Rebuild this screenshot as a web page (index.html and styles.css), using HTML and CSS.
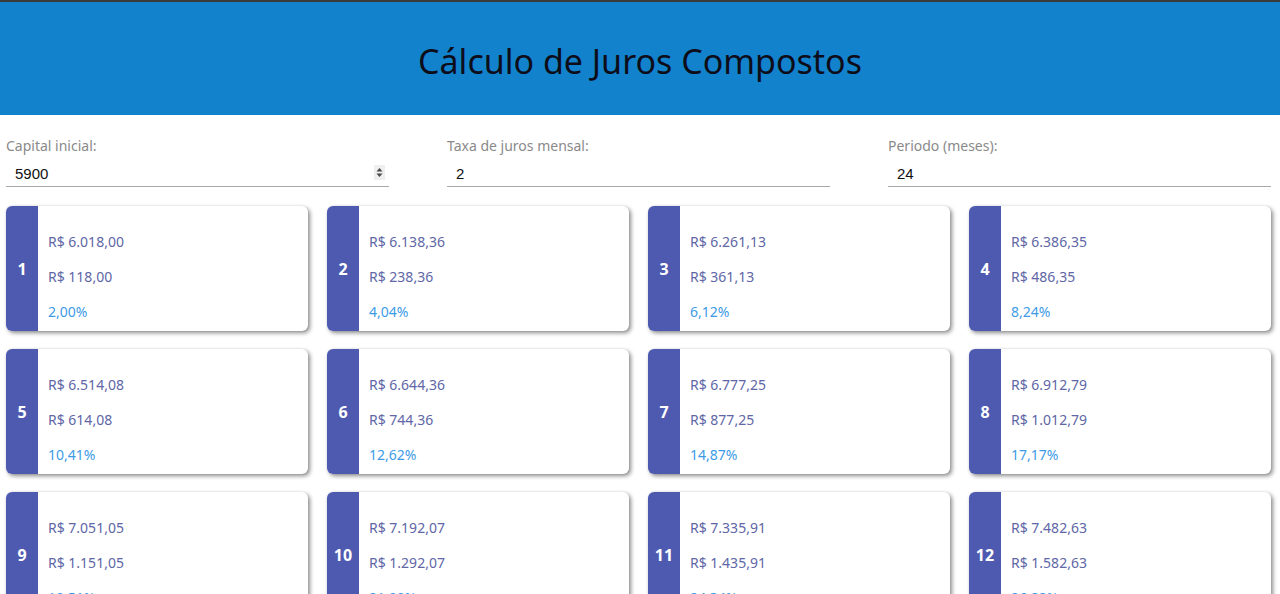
FILE: index.html
```
<!DOCTYPE html>
<html lang="pt-BR">
<head>
<meta charset="utf-8">
<title>Cálculo de Juros Compostos</title>
<link rel="stylesheet" href="styles.css">
</head>
<body>
<header class="topbar">
  <h1 class="title">Cálculo de Juros Compostos</h1>
</header>
<section class="form">
  <div class="field">
    <label class="label">Capital inicial:</label>
    <div class="control">
      <input class="input" type="text" value="5900">
      <svg class="spin" width="11" height="15" viewBox="0 0 11 15"><rect width="11" height="15" fill="#efefef"/><path d="M2.5 6.5 L5.5 3 L8.5 6.5 Z M2.5 8.5 L5.5 12 L8.5 8.5 Z" fill="#4a4a4a"/></svg>
    </div>
  </div>
  <div class="field">
    <label class="label">Taxa de juros mensal:</label>
    <div class="control"><input class="input" type="text" value="2"></div>
  </div>
  <div class="field">
    <label class="label">Periodo (meses):</label>
    <div class="control"><input class="input" type="text" value="24"></div>
  </div>
</section>
<section class="grid">
  <div class="card"><div class="num">1</div><div class="vals"><span class="v">R$ 6.018,00</span><span class="v">R$ 118,00</span><span class="p">2,00%</span></div></div>
  <div class="card"><div class="num">2</div><div class="vals"><span class="v">R$ 6.138,36</span><span class="v">R$ 238,36</span><span class="p">4,04%</span></div></div>
  <div class="card"><div class="num">3</div><div class="vals"><span class="v">R$ 6.261,13</span><span class="v">R$ 361,13</span><span class="p">6,12%</span></div></div>
  <div class="card"><div class="num">4</div><div class="vals"><span class="v">R$ 6.386,35</span><span class="v">R$ 486,35</span><span class="p">8,24%</span></div></div>
  <div class="card"><div class="num">5</div><div class="vals"><span class="v">R$ 6.514,08</span><span class="v">R$ 614,08</span><span class="p">10,41%</span></div></div>
  <div class="card"><div class="num">6</div><div class="vals"><span class="v">R$ 6.644,36</span><span class="v">R$ 744,36</span><span class="p">12,62%</span></div></div>
  <div class="card"><div class="num">7</div><div class="vals"><span class="v">R$ 6.777,25</span><span class="v">R$ 877,25</span><span class="p">14,87%</span></div></div>
  <div class="card"><div class="num">8</div><div class="vals"><span class="v">R$ 6.912,79</span><span class="v">R$ 1.012,79</span><span class="p">17,17%</span></div></div>
  <div class="card"><div class="num">9</div><div class="vals"><span class="v">R$ 7.051,05</span><span class="v">R$ 1.151,05</span><span class="p">19,51%</span></div></div>
  <div class="card"><div class="num">10</div><div class="vals"><span class="v">R$ 7.192,07</span><span class="v">R$ 1.292,07</span><span class="p">21,90%</span></div></div>
  <div class="card"><div class="num">11</div><div class="vals"><span class="v">R$ 7.335,91</span><span class="v">R$ 1.435,91</span><span class="p">24,34%</span></div></div>
  <div class="card"><div class="num">12</div><div class="vals"><span class="v">R$ 7.482,63</span><span class="v">R$ 1.582,63</span><span class="p">26,82%</span></div></div>
  <div class="card"><div class="num">13</div><div class="vals"><span class="v">R$ 7.632,28</span><span class="v">R$ 1.732,28</span><span class="p">29,36%</span></div></div>
  <div class="card"><div class="num">14</div><div class="vals"><span class="v">R$ 7.784,93</span><span class="v">R$ 1.884,93</span><span class="p">31,95%</span></div></div>
  <div class="card"><div class="num">15</div><div class="vals"><span class="v">R$ 7.940,63</span><span class="v">R$ 2.040,63</span><span class="p">34,59%</span></div></div>
  <div class="card"><div class="num">16</div><div class="vals"><span class="v">R$ 8.099,44</span><span class="v">R$ 2.199,44</span><span class="p">37,28%</span></div></div>
  <div class="card"><div class="num">17</div><div class="vals"><span class="v">R$ 8.261,43</span><span class="v">R$ 2.361,43</span><span class="p">40,02%</span></div></div>
  <div class="card"><div class="num">18</div><div class="vals"><span class="v">R$ 8.426,66</span><span class="v">R$ 2.526,66</span><span class="p">42,82%</span></div></div>
  <div class="card"><div class="num">19</div><div class="vals"><span class="v">R$ 8.595,19</span><span class="v">R$ 2.695,19</span><span class="p">45,68%</span></div></div>
  <div class="card"><div class="num">20</div><div class="vals"><span class="v">R$ 8.767,09</span><span class="v">R$ 2.867,09</span><span class="p">48,59%</span></div></div>
  <div class="card"><div class="num">21</div><div class="vals"><span class="v">R$ 8.942,44</span><span class="v">R$ 3.042,44</span><span class="p">51,57%</span></div></div>
  <div class="card"><div class="num">22</div><div class="vals"><span class="v">R$ 9.121,28</span><span class="v">R$ 3.221,28</span><span class="p">54,60%</span></div></div>
  <div class="card"><div class="num">23</div><div class="vals"><span class="v">R$ 9.303,71</span><span class="v">R$ 3.403,71</span><span class="p">57,69%</span></div></div>
  <div class="card"><div class="num">24</div><div class="vals"><span class="v">R$ 9.489,78</span><span class="v">R$ 3.589,78</span><span class="p">60,84%</span></div></div>
</section>
</body>
</html>
```
FILE: styles.css
```
html, body {
  margin: 0;
  padding: 0;
  background: #ffffff;
}
html::-webkit-scrollbar { width: 0; height: 0; }
body {
  font-family: "Segoe UI", "Noto Sans", "Open Sans", sans-serif;
  border-top: 2px solid #3a3a3a;
}
.topbar {
  background: #1382cc;
  height: 113px;
  display: flex;
  align-items: center;
  justify-content: center;
}
.title {
  margin: 0;
  font-weight: 400;
  font-size: 34px;
  color: #0d0d1a;
  padding-top: 4px;
}
.form {
  display: flex;
  justify-content: space-between;
  padding: 21px 9px 0 6px;
}
.field {
  width: 383px;
  display: flex;
  flex-direction: column;
}
.label {
  font-size: 14px;
  color: #8a8a8a;
  line-height: 20px;
}
.control {
  position: relative;
  margin-top: 5px;
}
.input {
  box-sizing: border-box;
  width: 100%;
  border: none;
  border-bottom: 1px solid #a8a8a8;
  outline: none;
  padding: 0 0 1px 9px;
  height: 26px;
  font-family: "Liberation Sans", Arial, sans-serif;
  font-size: 15px;
  color: #111;
  background: transparent;
}
.spin {
  position: absolute;
  right: 4px;
  top: 4px;
}
.grid {
  display: grid;
  grid-template-columns: repeat(4, 302px);
  column-gap: 19px;
  row-gap: 18px;
  padding: 19px 0 0 6px;
}
.card {
  height: 125px;
  display: flex;
  border-radius: 6px;
  background: #fff;
  box-shadow: 2px 2px 4px rgba(0, 0, 0, 0.45), 0 0 2px rgba(0, 0, 0, 0.08);
  overflow: hidden;
}
.num {
  width: 32px;
  flex: none;
  background: #4e5ab0;
  color: #fff;
  font-weight: 700;
  font-size: 16px;
  display: flex;
  align-items: center;
  justify-content: center;
}
.vals {
  display: flex;
  flex-direction: column;
  padding: 26px 0 0 10px;
  gap: 15px;
}
.v, .p {
  font-size: 14px;
  line-height: 20px;
}
.v { color: #6066a6; }
.p { color: #3d9be6; }
```
